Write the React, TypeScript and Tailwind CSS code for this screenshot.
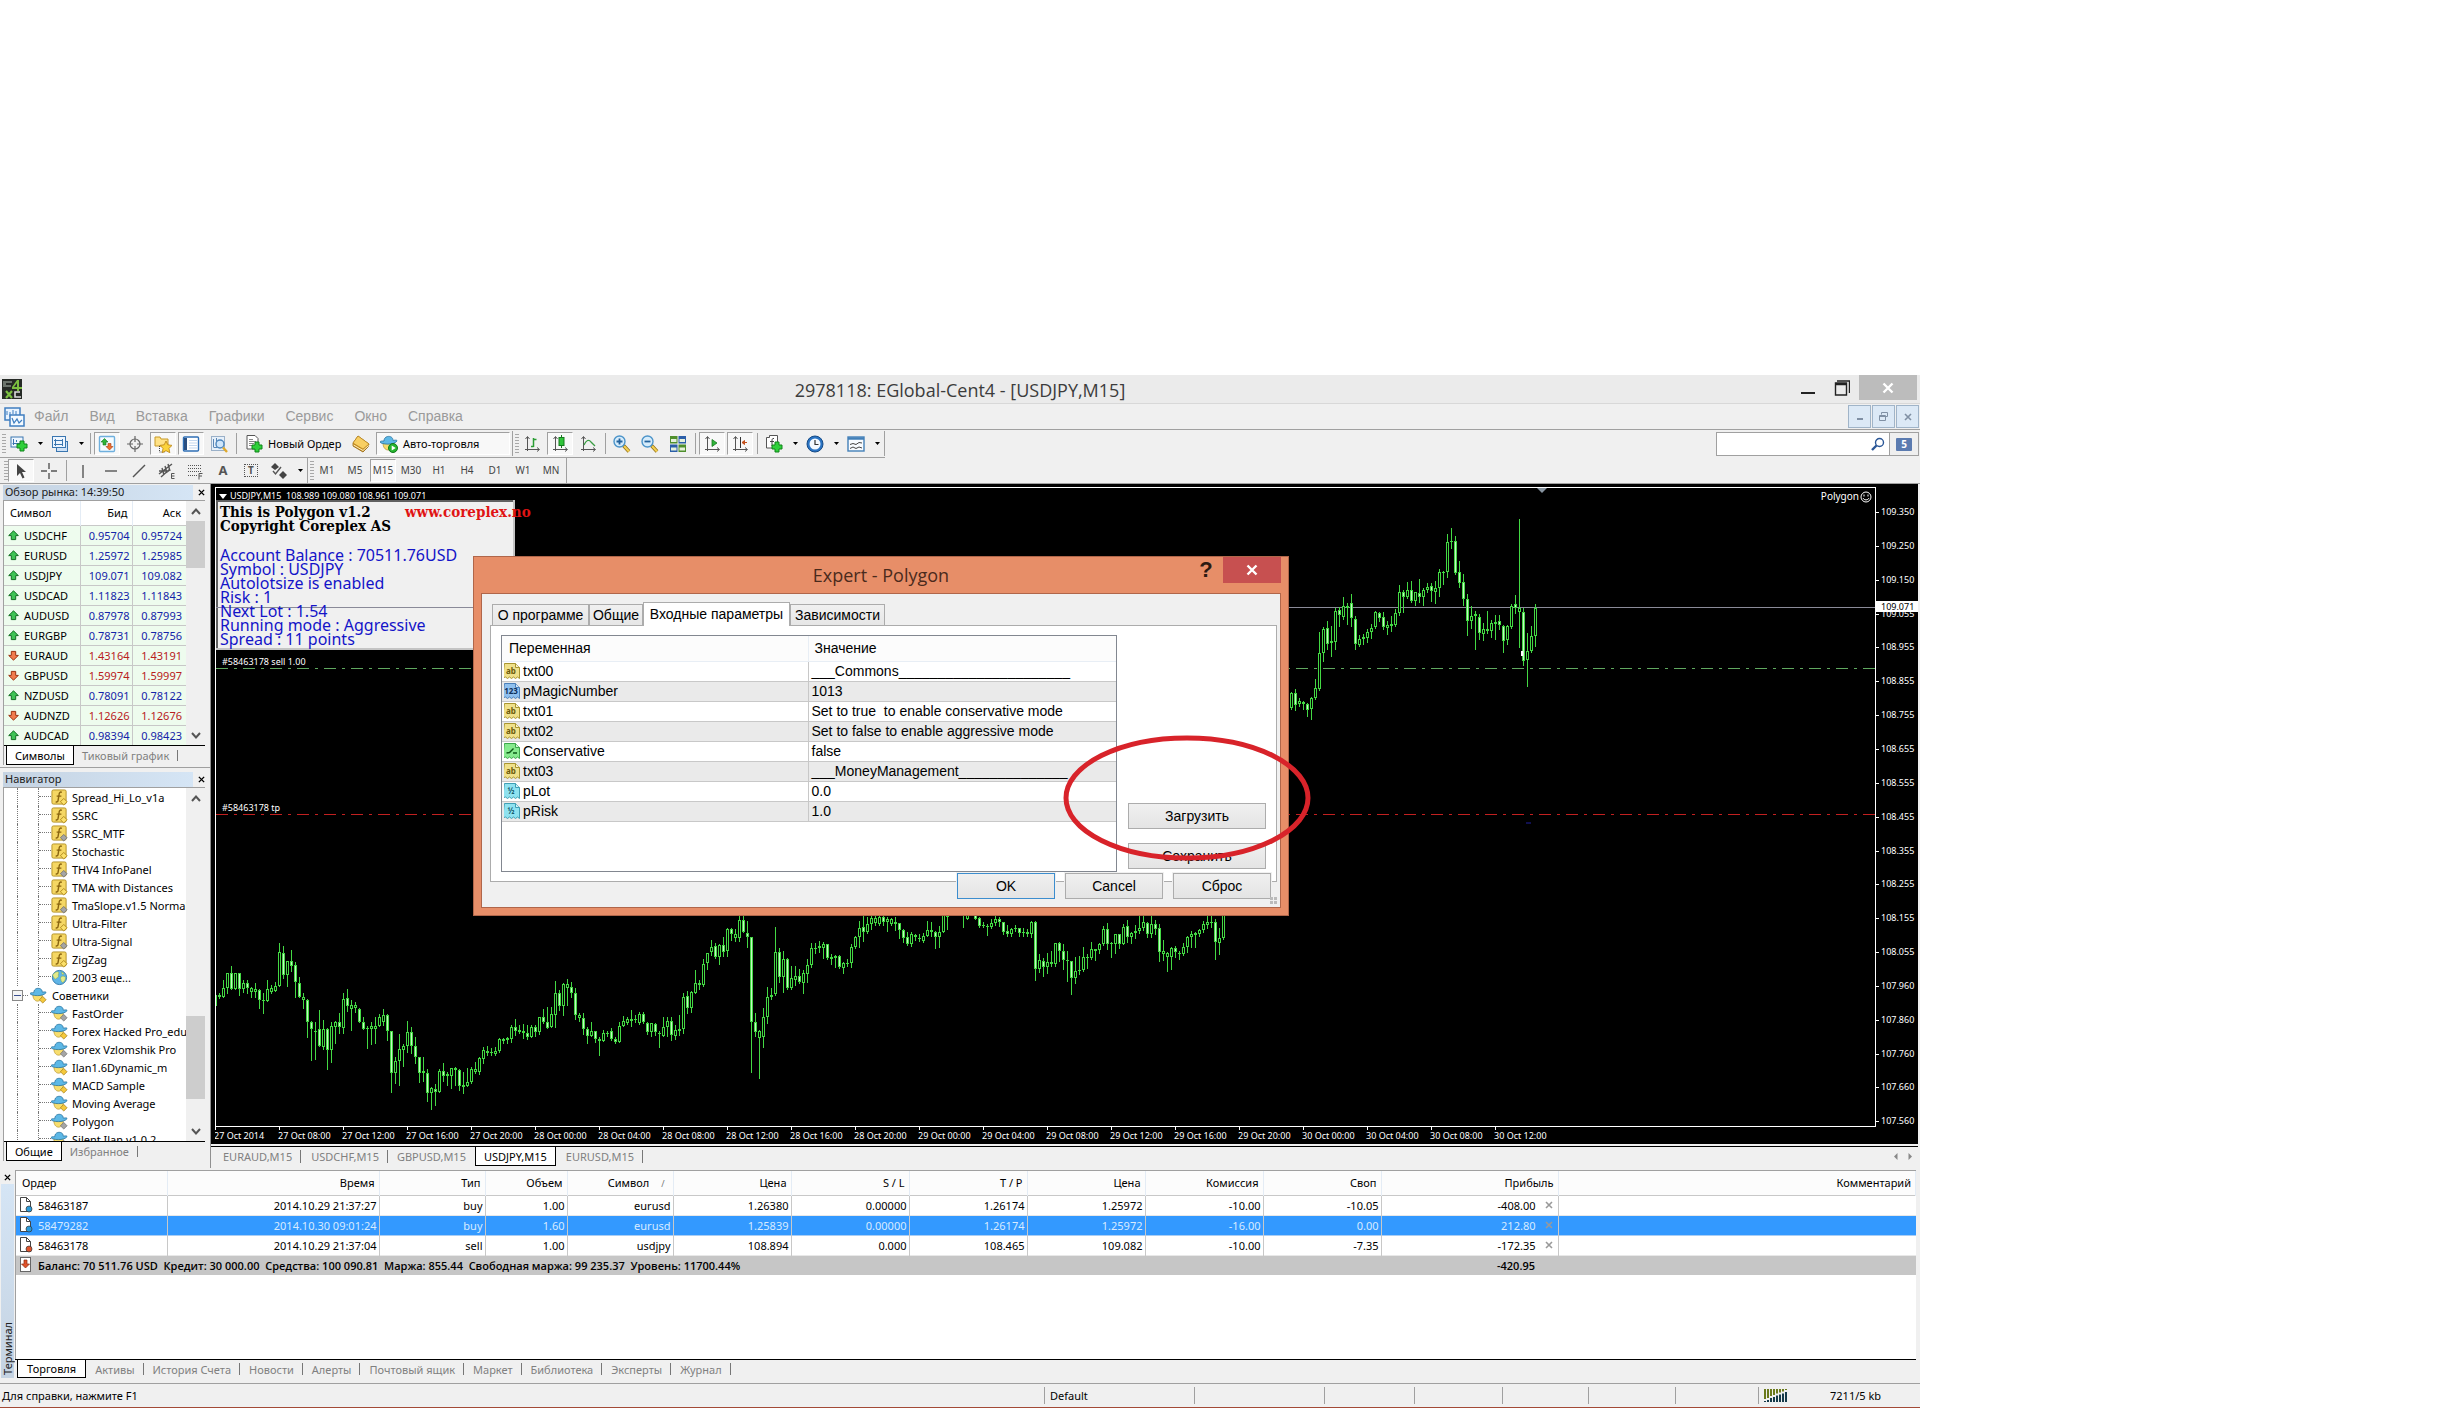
import { ReactNode } from 'react'
import clsx from 'clsx'

// ── Chart data ───────────────────────────────────────────────────────────────
// Each bar is "high,top,bottom,low" in points below the session ceiling,
// a trailing "f" marks a bearish (filled) body.
interface Session {
  start: number
  base: number
  bars: string
}

const SESSIONS: Session[] = [
  {
    start: 0,
    base: 412,
    bars: `
      275,285,318,330 280,285,290,295 240,263,290,290 220,220,263,280 198,220,267,268,f 220,220,267,268
      218,220,267,285,f 240,250,268,275 240,250,265,280,f 260,263,275,290 250,268,275,290 268,270,300,325,f
      280,300,301,340 240,268,302,303 255,265,275,280 245,258,272,272 130,157,257,257 138,160,225,235,f
      182,184,225,257 150,182,197,212,f 185,195,245,290,f 230,250,292,292,f 280,292,300,325 298,300,365,410,f
      362,365,387,480,f 365,393,397,478 330,387,437,438,f 360,388,440,448 385,388,450,506,f 366,377,450,486
      362,365,380,428 340,365,380,400,f 280,298,383,400 267,295,318,332,f 300,315,327,390 307,315,325,335
      325,328,365,367,f 350,365,387,388,f 377,385,388,445 365,378,388,433 352,378,388,430 343,352,377,378
      328,345,365,375 343,346,393,420,f 393,394,520,575,f 470,482,520,548 403,447,482,555 433,437,450,498
      363,397,437,455 380,397,438,458,f 410,437,472,488,f 470,472,518,547,f 470,513,520,543 508,520,580,602,f
      560,563,578,627 552,568,575,616,f 508,513,575,575 490,513,527,543,f 515,522,527,555 503,505,527,563
      500,503,510,555 508,510,557,570,f 515,555,560,578 505,545,557,557 500,508,547,550 485,508,515,520
      470,475,515,522 440,450,478,490 438,452,460,465 445,455,460,465 440,452,462,465 413,418,452,455
      415,418,422,430 410,415,420,428 375,382,418,425 357,382,393,405,f 375,390,395,400 372,392,400,415
      375,400,410,417,f 375,380,410,410 375,380,397,408,f 350,352,397,403 328,352,367,370,f 320,365,383,383,f
      320,343,380,380 242,280,345,380 270,280,318,330,f 250,252,318,345 237,252,263,315 247,260,280,290,f
      265,280,345,358,f 340,345,355,362 340,355,388,403,f 380,388,408,430,f 367,393,407,407 393,393,418,425,f
      412,418,423,465 390,400,423,423 392,400,402,408 385,393,418,420,f 412,418,427,430,f 367,377,425,425
      348,362,377,378 350,358,368,372 330,357,362,378 345,357,358,367 335,343,370,372 335,343,367,370,f
      365,370,397,402,f 368,370,397,408 368,372,397,405,f 393,400,403,440 352,380,407,407 350,363,380,408
      350,362,405,420,f 375,390,407,418 345,388,393,405 278,290,388,398 273,288,325,340,f 273,277,325,335
      210,250,278,280 240,248,255,268 178,193,255,257 160,160,188,208 120,140,155,165 130,138,172,173,f
      133,135,170,193 112,135,155,168,f 85,87,153,167 85,88,103,120,f 88,103,115,122 20,60,115,122
      10,60,97,97,f 63,98,112,140,f 110,112,365,515,f 340,365,395,408,f 390,393,413,535 323,352,410,440
      260,290,352,368 265,285,292,297 82,157,283,285 145,157,232,245,f 152,178,232,275 175,178,265,266,f
      197,235,265,268 197,227,240,255 207,227,247,250,f 210,218,248,278 178,195,222,245 130,145,195,200
      128,143,147,160 123,138,145,155 125,133,143,175 133,133,175,177,f 162,170,178,192 165,167,173,202
      165,168,202,203,f 187,190,203,218 177,188,192,197 132,140,190,200 108,112,140,143 63,83,110,142
      40,80,95,122,f 50,72,95,98 45,55,72,88 45,55,70,75 40,50,72,75 40,52,65,75,f
      50,57,67,92 55,58,72,75 52,67,73,90 70,70,90,115,f 87,90,113,127,f 95,112,132,135,f
      97,102,133,137 103,105,110,120 102,113,118,123 100,107,122,125 63,90,107,107 67,90,95,107
      93,95,110,143,f 78,97,110,140 30,45,97,97 20,45,50,87 10,20,30,40 10,20,30,40
      10,20,30,40 30,40,45,80 40,45,57,57 20,30,40,45 40,45,57,57,f 50,55,78,82,f
      65,75,78,82 72,77,80,105 57,70,80,83 45,57,70,75 50,57,67,78,f 65,67,95,103,f
      75,93,103,107,f 83,88,103,107 75,83,88,93 83,85,100,107,f 85,95,100,107 87,97,103,107
      62,65,103,112 63,65,208,240,f 162,180,208,215 175,182,200,227,f 160,185,202,220 152,185,193,197
      128,130,193,197 127,128,152,182,f 133,152,180,208,f 153,180,182,242 182,182,235,282,f 172,213,235,248
      168,210,213,222 142,172,210,212 163,170,173,203 127,148,173,178 147,148,152,180 130,133,150,160
      78,87,133,135 68,88,132,147,f 127,130,133,170 102,103,133,160 102,103,132,145,f 72,80,132,133
      60,78,110,125,f 97,98,110,128 75,92,98,115 40,85,93,98 40,67,85,90 65,70,103,110,f
      40,73,103,112 60,73,88,103,f 72,85,155,183,f 120,152,162,180 155,160,170,213 140,143,172,208
      138,145,155,170,f 152,158,160,177 130,142,162,165 108,110,142,155 93,103,110,140 95,100,105,142
      87,90,103,108 63,73,90,97 40,67,75,85 40,65,67,82 57,67,127,177,f 85,115,130,162 30,40,115,118`,
  },
  {
    start: 269,
    base: -8,
    bars: `
      637,640,685,687 627,640,675,690,f 655,663,673,677 662,665,673,687 670,672,690,708,f 650,653,688,716
      597,625,655,657 457,520,628,630 440,448,518,542 423,445,492,508,f 437,483,490,528 383,393,485,507
      380,390,405,437,f 352,378,410,418 368,377,383,432 342,370,415,437,f 408,418,493,507,f 465,477,495,497
      463,470,477,492 447,457,475,487 433,443,457,473 392,397,442,445 395,398,413,423,f 397,410,440,448,f
      423,435,443,463 407,433,437,453 387,400,435,438 315,337,400,405 330,335,352,397,f 307,330,352,355
      303,330,362,367,f 335,337,362,375 297,338,352,365,f 325,330,352,375 308,320,330,335 308,318,333,362,f
      303,325,335,368 268,275,325,347 272,277,280,313 162,187,277,290 145,183,187,203 167,183,280,283,f
      243,277,308,322,f 283,307,357,375,f 343,357,423,465,f 378,408,423,443 393,403,408,507 403,410,460,477,f
      430,448,462,480 393,447,452,460 420,430,452,470 405,425,433,477 405,423,435,447,f 435,438,482,515,f
      435,438,480,492 372,377,440,443 345,373,385,398,f 118,383,395,500 385,397,542,555,f 460,512,540,617
      437,468,512,515 373,383,467,497`,
  },
]

const PRICES = [
  '109.350', '109.250', '109.150', '109.055', '108.955', '108.855', '108.755', '108.655', '108.555', '108.455',
  '108.355', '108.255', '108.155', '108.055', '107.960', '107.860', '107.760', '107.660', '107.560',
]

const TIMES = [
  '27 Oct 2014', '27 Oct 08:00', '27 Oct 12:00', '27 Oct 16:00', '27 Oct 20:00', '28 Oct 00:00', '28 Oct 04:00',
  '28 Oct 08:00', '28 Oct 12:00', '28 Oct 16:00', '28 Oct 20:00', '29 Oct 00:00', '29 Oct 04:00', '29 Oct 08:00',
  '29 Oct 12:00', '29 Oct 16:00', '29 Oct 20:00', '30 Oct 00:00', '30 Oct 04:00', '30 Oct 08:00', '30 Oct 12:00',
]

// ── Panel data ───────────────────────────────────────────────────────────────
const QUOTES = [
  { name: 'USDCHF', bid: '0.95704', ask: '0.95724', up: true },
  { name: 'EURUSD', bid: '1.25972', ask: '1.25985', up: true },
  { name: 'USDJPY', bid: '109.071', ask: '109.082', up: true },
  { name: 'USDCAD', bid: '1.11823', ask: '1.11843', up: true },
  { name: 'AUDUSD', bid: '0.87978', ask: '0.87993', up: true },
  { name: 'EURGBP', bid: '0.78731', ask: '0.78756', up: true },
  { name: 'EURAUD', bid: '1.43164', ask: '1.43191', up: false },
  { name: 'GBPUSD', bid: '1.59974', ask: '1.59997', up: false },
  { name: 'NZDUSD', bid: '0.78091', ask: '0.78122', up: true },
  { name: 'AUDNZD', bid: '1.12626', ask: '1.12676', up: false },
  { name: 'AUDCAD', bid: '0.98394', ask: '0.98423', up: true },
]

const INDICATORS = [
  { name: 'Spread_Hi_Lo_v1a', gray: false },
  { name: 'SSRC', gray: false },
  { name: 'SSRC_MTF', gray: true },
  { name: 'Stochastic', gray: false },
  { name: 'THV4 InfoPanel', gray: true },
  { name: 'TMA with Distances', gray: false },
  { name: 'TmaSlope.v1.5 Normal', gray: true },
  { name: 'Ultra-Filter', gray: false },
  { name: 'Ultra-Signal', gray: true },
  { name: 'ZigZag', gray: false },
]

const EXPERTS = [
  { name: 'FastOrder', gray: true },
  { name: 'Forex Hacked Pro_edu', gray: false },
  { name: 'Forex Vzlomshik Pro', gray: true },
  { name: 'Ilan1.6Dynamic_m', gray: false },
  { name: 'MACD Sample', gray: false },
  { name: 'Moving Average', gray: false },
  { name: 'Polygon', gray: true },
  { name: 'Silent Ilan v1.0.2', gray: true },
]

const PARAMS = [
  { kind: 'ab', name: 'txt00', value: '___Commons______________________' },
  { kind: '123', name: 'pMagicNumber', value: '1013' },
  { kind: 'ab', name: 'txt01', value: 'Set to true  to enable conservative mode' },
  { kind: 'ab', name: 'txt02', value: 'Set to false to enable aggressive mode' },
  { kind: 'bool', name: 'Conservative', value: 'false' },
  { kind: 'ab', name: 'txt03', value: '___MoneyManagement______________' },
  { kind: '½', name: 'pLot', value: '0.0' },
  { kind: '½', name: 'pRisk', value: '1.0' },
]

const ORDERS = [
  ['58463187', '2014.10.29 21:37:27', 'buy', '1.00', 'eurusd', '1.26380', '0.00000', '1.26174', '1.25972', '-10.00', '-10.05', '-408.00'],
  ['58479282', '2014.10.30 09:01:24', 'buy', '1.60', 'eurusd', '1.25839', '0.00000', '1.26174', '1.25972', '-16.00', '0.00', '212.80'],
  ['58463178', '2014.10.29 21:37:04', 'sell', '1.00', 'usdjpy', '108.894', '0.000', '108.465', '109.082', '-10.00', '-7.35', '-172.35'],
]

const ORDER_HEAD = ['Ордер', 'Время', 'Тип', 'Объем', 'Символ', 'Цена', 'S / L', 'T / P', 'Цена', 'Комиссия', 'Своп', 'Прибыль', 'Комментарий']

const TERMINAL_TABS = ['Торговля', 'Активы', 'История Счета', 'Новости', 'Алерты', 'Почтовый ящик', 'Маркет', 'Библиотека', 'Эксперты', 'Журнал']

// ── Icons ────────────────────────────────────────────────────────────────────
function Ico({ children, size = 18 }: { children: ReactNode; size?: number }) {
  return (
    <svg width={size} height={size} viewBox="0 0 18 18" className="shrink-0" aria-hidden="true">
      {children}
    </svg>
  )
}

const Plus = ({ x, y }: { x: number; y: number }) => (
  <path
    d={`M${x + 3} ${y}h4v3h3v4h-3v3h-4v-3h-3v-4h3z`}
    fill="#2fd03a" stroke="#11841a" strokeWidth="1"
  />
)

const Axes = () => <path d="M4.5 2v14M2 14.5h14M2.5 4l2-2.5 2 2.5M14 12.5l2.5 2-2.5 2" fill="none" stroke="#555" />

const NewChartIcon = () => (
  <Ico>
    <rect x="1" y="2" width="12" height="10" fill="#eef6ff" stroke="#3a76b0" />
    <path d="M3.5 4v6M2.5 8.5h8M6.5 5v2" stroke="#3a76b0" fill="none" />
    <Plus x={7} y={6} />
  </Ico>
)
const ProfilesIcon = () => (
  <Ico>
    <rect x="5.5" y="6.5" width="11" height="10" fill="#cfe2f7" stroke="#3a76b0" />
    <rect x="1.5" y="1.5" width="13" height="11" fill="#eef6ff" stroke="#3a76b0" />
    <path d="M3 5.5h9M3 9.5h9M4.5 4v7M11.5 4v7" stroke="#3a76b0" fill="none" />
  </Ico>
)
const MarketIcon = () => (
  <Ico>
    <rect x="1.5" y="1.5" width="15" height="15" rx="1" fill="#f5fbff" stroke="#6fb0de" strokeWidth="1.4" />
    <path d="M6.5 3.5L10 7H8v3H5V7H3z" fill="#2fb53a" stroke="#11771a" strokeWidth=".6" />
    <path d="M11.5 15L15 11.5h-2v-3h-3v3H8z" fill="#f07030" stroke="#a43a10" strokeWidth=".6" />
  </Ico>
)
const AimIcon = () => (
  <Ico>
    <circle cx="9" cy="9" r="5" fill="none" stroke="#666" strokeWidth="1.2" />
    <path d="M9 1v6M9 11v6M1 9h6M11 9h6" stroke="#666" strokeWidth="1.2" />
  </Ico>
)
const FolderStarIcon = () => (
  <Ico>
    <path d="M1 2h5l1 2h7v7H1z" fill="#ffe287" stroke="#c79a28" />
    <path d="M5.5 11v6h5" fill="none" stroke="#444" strokeDasharray="1 1" />
    <path d="M12 6l1.8 3.8 4.2.6-3 3 .8 4.3-3.8-2-3.8 2 .8-4.3-3-3 4.2-.6z" fill="#fbd33c" stroke="#b98212" strokeWidth=".8" />
  </Ico>
)
const DataWindowIcon = () => (
  <Ico>
    <rect x="1.5" y="2" width="15" height="14" rx="1" fill="#fff" stroke="#2f6fb5" strokeWidth="1.4" />
    <rect x="2" y="3" width="3" height="12" fill="#2a4f80" />
    <path d="M7 5.5h8M7 8h8M7 10.5h8M7 13h8" stroke="#c3d7ee" strokeWidth="1" />
  </Ico>
)
const TesterIcon = () => (
  <Ico>
    <rect x="1.5" y="1.5" width="13" height="14" fill="#e6f0fa" stroke="#9ab0c8" />
    <path d="M3.5 4v8M3.5 12.5h4M6.5 3v4" stroke="#5b86b5" fill="none" />
    <circle cx="10" cy="9" r="4" fill="#cfe6fb" stroke="#4d86bd" strokeWidth="1.4" />
    <path d="M13 12.5l4 4.5" stroke="#dfa92c" strokeWidth="2.4" />
  </Ico>
)
const OrderIcon = () => (
  <Ico>
    <path d="M2 .5h8l3 3V14H2z" fill="#fff" stroke="#555" />
    <path d="M4 4.5h4M4 6.5h7M4 8.5h5M4 10.5h3" stroke="#888" />
    <Plus x={7} y={7} />
  </Ico>
)
const GoldIcon = () => (
  <Ico>
    <path d="M1 8L6 1l11 8-1 3-5 5L1 11z" fill="#c98d1c" stroke="#94650f" strokeWidth=".8" />
    <path d="M1 8l5-7 11 8-6 5z" fill="#f8cf63" stroke="#b37f1a" strokeWidth=".6" />
    <path d="M1.5 10l9.500 5.500 5.500-5" fill="none" stroke="#fff2c4" />
  </Ico>
)
const HatIcon = () => (
  <>
    <path d="M3 8c0 4 2 7 5 7s5-3 5-7z" fill="#f7dd6d" stroke="#b38f25" strokeWidth=".7" />
    <path d="M0 7c1 2.5 14 3.5 17-1 .5-1-2-1-4-.5C13 2 10 1 7.5 1.5S4 4 4 6C2 6 0 6 0 7z" fill="#5db8e6" stroke="#22709e" strokeWidth=".8" />
  </>
)
const AutoIcon = () => (
  <Ico>
    <HatIcon />
    <circle cx="13" cy="13" r="4.5" fill="#25b52e" stroke="#10771a" />
    <path d="M11.7 10.5l4 2.5-4 2.5z" fill="#fff" />
  </Ico>
)
const ExpertIcon = ({ gray }: { gray: boolean }) => (
  <Ico size={17}>
    <HatIcon />
    <path d="M13.5 10l3.5 3.5-3.5 3.5-3.5-3.5z" fill={gray ? '#a5a5a5' : '#f5c93c'} stroke={gray ? '#6f6f6f' : '#a87f14'} strokeWidth=".8" />
  </Ico>
)
const FuncIcon = ({ gray }: { gray: boolean }) => (
  <Ico size={17}>
    <rect x="1" y="1" width="15" height="15" rx="1.5" fill="#f5d764" stroke="#b39125" />
    <path d="M11.5 3.5c-2-.8-2.7.4-3 2.5L7.5 12c-.3 1.5-1 2-2.5 1.5M6 7.5h5" fill="none" stroke="#8a6510" strokeWidth="1.5" />
    <path d="M13.5 10l3.5 3.5-3.5 3.5-3.5-3.5z" fill={gray ? '#a5a5a5' : '#fbe06a'} stroke={gray ? '#6f6f6f' : '#a87f14'} strokeWidth=".9" />
  </Ico>
)
const GlobeIcon = () => (
  <Ico size={17}>
    <circle cx="9" cy="9" r="7.5" fill="#5fb4e6" stroke="#2f78ab" />
    <path d="M4 4c3-2 5-1 4 1s1 3-1 4-2 3-4 0-1-3 1-5zM11 8c3-1 5 0 4 3s-3 4-4 2 0-2-1-3zM11 3l3 2-2 1z" fill="#e3ea8a" stroke="#7da02c" strokeWidth=".4" />
  </Ico>
)
const Magnifier = ({ sign }: { sign: string }) => (
  <Ico>
    <path d="M10.5 10.5l5.5 6" stroke="#8f6b12" strokeWidth="3.6" />
    <path d="M11 11l5 5.5" stroke="#f2cf52" strokeWidth="2.2" />
    <circle cx="6.5" cy="6.5" r="5.5" fill="#d6ecfb" stroke="#4c94c9" strokeWidth="1.4" />
    <path d={sign} stroke="#23629c" strokeWidth="1.8" />
  </Ico>
)
const TileIcon = () => (
  <Ico>
    <rect x="1" y="1" width="7.5" height="7.5" fill="#4f8f2c" />
    <rect x="9.5" y="1" width="7.5" height="7.5" fill="#2b5ea8" />
    <rect x="1" y="9.5" width="7.5" height="7.5" fill="#2b5ea8" />
    <rect x="9.5" y="9.5" width="7.5" height="7.5" fill="#4f8f2c" />
    <path d="M2 4h5.5v3H2zM10.5 4H16v3h-5.500zM2 12.5h5.5v3H2zM10.5 12.5H16v3h-5.5z" fill="#e6f1dc" />
  </Ico>
)
const BarsIcon = () => <Ico><Axes /><path d="M10.5 3v9M10.5 4.5h3M8 11.5h2.5" stroke="#2a9c33" strokeWidth="1.5" /></Ico>
const CandleIcon = () => (
  <Ico>
    <Axes />
    <path d="M10.5 0v13" stroke="#167a1e" />
    <rect x="8" y="2.5" width="5" height="8" fill="#2fc43a" stroke="#167a1e" />
  </Ico>
)
const LineIcon = () => <Ico><Axes /><path d="M5 10c2-5 5-6 7-3l4 4" fill="none" stroke="#3a9c43" strokeWidth="1.3" /></Ico>
const ScrollIcon = () => <Ico><Axes /><path d="M9 4.5l5 3.5-5 3.5z" fill="#2fb53a" stroke="#167a1e" strokeWidth=".8" /></Ico>
const ShiftIcon = () => (
  <Ico>
    <Axes />
    <path d="M9.5 2v11" stroke="#333" />
    <path d="M16 7.5h-5M13.5 5.5l-2.5 2 2.5 2z" fill="#c4501c" stroke="#c4501c" />
  </Ico>
)
const IndicatorsIcon = () => (
  <Ico>
    <path d="M1.5 2.5h3v-2h8V13h-11z" fill="#fff" stroke="#555" />
    <path d="M9 3.5c-2-.5-2 1-2 3V11M5 6.5h4" fill="none" stroke="#444" />
    <Plus x={7} y={7} />
  </Ico>
)
const ClockIcon = () => (
  <Ico>
    <circle cx="9" cy="9" r="8" fill="#2a74c4" stroke="#154a85" />
    <circle cx="9" cy="9" r="5.5" fill="#f3f9ff" />
    <path d="M9 5v4.5h3.5" fill="none" stroke="#333" strokeWidth="1.2" />
  </Ico>
)
const TemplateIcon = () => (
  <Ico>
    <rect x="1" y="2" width="16" height="14" fill="#f8fbff" stroke="#4380b8" strokeWidth="1.4" />
    <path d="M1 3.5h16" stroke="#4380b8" strokeWidth="2.5" />
    <path d="M3 9.5l3-1 3 1 3-2 3 .5M3 13.5l3-1.5 3 1.5 3-1.5 3 1" fill="none" stroke="#444" />
  </Ico>
)

const stroke = { fill: 'none', stroke: '#555', strokeWidth: 1.4 }
const CursorIcon = () => <Ico><path d="M5 2v12l3-3 2.5 5.5 2-1L10 10h4z" fill="#444" /></Ico>
const CrossIcon = () => <Ico><path d="M9 1v6M9 11v6M1 9h6M11 9h6" {...stroke} /></Ico>
const VLineIcon = () => <Ico><path d="M9 3v13" {...stroke} /></Ico>
const HLineIcon = () => <Ico><path d="M3 9h12" {...stroke} /></Ico>
const TrendIcon = () => <Ico><path d="M3 15L15 3" {...stroke} /></Ico>
const ChannelIcon = () => (
  <Ico>
    <path d="M1 12L14 2M3 15L12 7M4 6l2 7M7 4l2 7M10 2l2 7M1 9h10" {...stroke} />
    <path d="M16.5 11.5h-3v5h3M13.5 14h3" {...stroke} strokeWidth="1" />
  </Ico>
)
const FiboIcon = () => (
  <Ico>
    <path d="M2 3.5h14M2 6.5h14M2 9.5h14M2 13.5h9" stroke="#555" strokeDasharray="1 1" />
    <path d="M16.5 11.5H13v6M13 14h3" {...stroke} strokeWidth="1" />
  </Ico>
)
const ShapesIcon = () => (
  <Ico>
    <path d="M1 5l4-4 4 4-4 3zM9 13l4-4 4 4-4 4z" fill="#444" />
    <path d="M3 9l2.5 3L11 5" {...stroke} />
  </Ico>
)

const ArrowIcon = ({ up }: { up: boolean }) => (
  <svg width="11" height="11" viewBox="0 0 11 11" className={clsx('shrink-0', !up && 'rotate-180')} aria-hidden="true">
    <path d="M5.5.8L10.3 5.6H7.7v4H3.3v-4H.7z" fill={up ? '#3fc455' : '#f07a4c'} stroke={up ? '#126e22' : '#9c3210'} />
  </svg>
)

const PARAM_COLORS: Record<string, string[]> = {
  ab: ['#efe08a', '#a8952f', '#6b5a08'],
  '123': ['#8fc0ee', '#4a7fb8', '#10305c'],
  bool: ['#86ea8e', '#3aa64a', '#0d5c18'],
  '½': ['#8fe2f0', '#3f9fb4', '#155d70'],
}

function ParamIcon({ kind }: { kind: string }) {
  const [fill, line, ink] = PARAM_COLORS[kind]
  return (
    <svg width="16" height="16" viewBox="0 0 16 16" className="shrink-0" aria-hidden="true">
      <path d="M.5.5h11l4 4v11l-2-1.5-2 1.5-2-1.5-2 1.5-2-1.5-2 1.5-2-1.5-3 1z" fill={fill} stroke={line} />
      <path d="M11.5.5v4h4" fill="#fff" fillOpacity=".6" stroke={line} />
      {kind === 'bool'
        ? <path d="M2.5 10l3-.5 4-4M9 10h4" fill="none" stroke={ink} strokeWidth="1.4" />
        : <text x="7" y="11" textAnchor="middle" fill={ink} className="font-['Noto_Sans'] text-[8px] font-bold">{kind}</text>}
    </svg>
  )
}

const DocIcon = ({ color }: { color: string }) => (
  <svg width="14" height="16" viewBox="0 0 14 16" className="shrink-0" aria-hidden="true">
    <path d="M1.5.5h6l4 4v10h-10z" fill="#fff" stroke="#444" />
    <path d="M7.5.5v4h4" fill="none" stroke="#444" />
    <circle cx="10" cy="12" r="3" fill={color} stroke="#333" strokeWidth=".7" />
  </svg>
)

const CloseX = ({ size = 8 }: { size?: number }) => (
  <svg width={size} height={size} viewBox="0 0 8 8" aria-hidden="true">
    <path d="M1 1l6 6M7 1L1 7" stroke="currentColor" strokeWidth="1.6" />
  </svg>
)

// ── Toolbar pieces ───────────────────────────────────────────────────────────
interface ToolProps {
  label: string
  pressed?: boolean
  children: ReactNode
}

function Tool({ label, pressed, children }: ToolProps) {
  return (
    <button
      type="button"
      title={label}
      aria-label={label}
      aria-pressed={pressed}
      className={clsx(
        'mr-[2px] flex h-[23px] w-[26px] shrink-0 items-center justify-center border',
        pressed ? 'border-[#a0a0a0] border-r-white border-b-white bg-[#f8f8f8]' : 'border-transparent',
      )}
    >
      {children}
    </button>
  )
}

const Caret = () => (
  <button type="button" aria-label="Ещё" className="flex w-[13px] shrink-0 items-center justify-center">
    <svg width="5" height="3" viewBox="0 0 5 3" aria-hidden="true"><path d="M0 0h5L2.5 3z" fill="#000" /></svg>
  </button>
)
const ToolSep = () => <span className="mr-[3px] ml-[2px] h-[21px] w-px shrink-0 bg-[#a0a0a0]" />
const ToolEnd = () => <span className="h-[25px] w-px shrink-0 bg-[#a0a0a0]" />
const Grip = () => <span className="ml-[2px] h-[20px] w-[4px] shrink-0 bg-[repeating-linear-gradient(#a8a8a8_0_1px,transparent_1px_3px)]" />

function Toolbars() {
  return (
    <div className="border-b border-[#a0a0a0]">
      <div className="flex h-[28px] items-center">
        <div className="flex h-full items-center border-b border-[#a0a0a0]">
          <Grip />
          <Tool label="Новый график"><NewChartIcon /></Tool>
          <Caret />
          <Tool label="Профили"><ProfilesIcon /></Tool>
          <Caret />
          <ToolSep />
          <Tool label="Обзор рынка" pressed><MarketIcon /></Tool>
          <Tool label="Перекрестие"><AimIcon /></Tool>
          <Tool label="Навигатор" pressed><FolderStarIcon /></Tool>
          <Tool label="Терминал" pressed><DataWindowIcon /></Tool>
          <Tool label="Тестер стратегий"><TesterIcon /></Tool>
          <ToolSep />
          <button type="button" className="flex w-[108px] items-center gap-[5px] pl-[5px] text-black">
            <OrderIcon />
            <span>Новый Ордер</span>
          </button>
          <Tool label="MetaEditor"><GoldIcon /></Tool>
          <button
            type="button"
            aria-pressed="true"
            className="mr-[2px] flex h-[23px] w-[134px] items-center gap-[5px] border border-[#a0a0a0] border-r-white border-b-white bg-[#f8f8f8] pl-[3px] text-black"
          >
            <AutoIcon />
            <span>Авто-торговля</span>
          </button>
          <ToolEnd />
          <Grip />
          <Tool label="Бары"><BarsIcon /></Tool>
          <Tool label="Свечи" pressed><CandleIcon /></Tool>
          <Tool label="Линия"><LineIcon /></Tool>
          <ToolSep />
          <Tool label="Увеличить"><Magnifier sign="M3.5 6.5h6M6.5 3.5v6" /></Tool>
          <Tool label="Уменьшить"><Magnifier sign="M3.5 6.5h6" /></Tool>
          <Tool label="Плитка"><TileIcon /></Tool>
          <ToolSep />
          <Tool label="Автопрокрутка" pressed><ScrollIcon /></Tool>
          <Tool label="Сдвиг графика" pressed><ShiftIcon /></Tool>
          <ToolSep />
          <Tool label="Индикаторы"><IndicatorsIcon /></Tool>
          <Caret />
          <Tool label="Периоды"><ClockIcon /></Tool>
          <Caret />
          <Tool label="Шаблоны"><TemplateIcon /></Tool>
          <Caret />
          <ToolEnd />
        </div>
        <div className="mr-px ml-auto flex h-[24px] border border-[#a0a0a0]">
          <input type="search" aria-label="Поиск" className="w-[150px] bg-white px-1 outline-none" />
          <button type="button" aria-label="Найти" className="bg-white px-[4px]">
            <svg width="14" height="14" viewBox="0 0 14 14" aria-hidden="true">
              <circle cx="8.5" cy="5.5" r="4" fill="#fff" stroke="#2b5797" strokeWidth="1.4" />
              <path d="M5.5 8.5L1 13" stroke="#2b5797" strokeWidth="2.4" />
            </svg>
          </button>
          <button type="button" aria-label="Сообщения" className="flex w-[29px] items-center justify-center border-l border-[#a0a0a0] bg-[#efefef]">
            <span className="rounded-[1px] bg-[#5b7bb0] px-[5px] text-[10px] leading-[13px] font-bold text-white">5</span>
          </button>
        </div>
      </div>

      <div className="flex h-[25px] items-center pl-[2px]">
        <Grip />
        <Tool label="Курсор" pressed><CursorIcon /></Tool>
        <Tool label="Перекрестие"><CrossIcon /></Tool>
        <ToolSep />
        <Tool label="Вертикальная линия"><VLineIcon /></Tool>
        <Tool label="Горизонтальная линия"><HLineIcon /></Tool>
        <Tool label="Трендовая линия"><TrendIcon /></Tool>
        <Tool label="Канал"><ChannelIcon /></Tool>
        <Tool label="Фибоначчи"><FiboIcon /></Tool>
        <Tool label="Текст"><span className="text-[13px] font-bold text-[#555]">A</span></Tool>
        <Tool label="Метка">
          <span className="border border-dotted border-[#555] px-[3px] text-[10px] leading-[11px] font-bold text-[#555]">T</span>
        </Tool>
        <Tool label="Стрелки"><ShapesIcon /></Tool>
        <Caret />
        <ToolEnd />
        <Grip />
        {['M1', 'M5', 'M15', 'M30', 'H1', 'H4', 'D1', 'W1', 'MN'].map(tf => (
          <Tool key={tf} label={tf} pressed={tf === 'M15'}>
            <span className="text-[10px] text-[#444]">{tf}</span>
          </Tool>
        ))}
        <ToolEnd />
      </div>
    </div>
  )
}

// ── Side panels ──────────────────────────────────────────────────────────────
function PanelTitle({ title }: { title: string }) {
  return (
    <div className="flex h-[15px] items-center">
      <h2 className="h-full flex-1 bg-gradient-to-r from-[#c5d3e2] to-[#d5e5f5] pl-[2px] leading-[14px] text-[#222]">{title}</h2>
      <button type="button" aria-label="Закрыть" className="flex w-[16px] justify-center text-black"><CloseX size={7} /></button>
    </div>
  )
}

const Chevron = ({ down }: { down?: boolean }) => (
  <button type="button" aria-label={down ? 'Вниз' : 'Вверх'} className="flex h-[20px] w-full items-center justify-center">
    <svg width="10" height="7" viewBox="0 0 10 7" aria-hidden="true">
      <path d={down ? 'M1 1l4 4.5L9 1' : 'M1 6l4-4.5L9 6'} fill="none" stroke="#555" strokeWidth="2" />
    </svg>
  </button>
)

function Scrollbar({ thumb }: { thumb: string }) {
  return (
    <div className="flex w-[19px] shrink-0 flex-col bg-[#f0f0f0]">
      <Chevron />
      <div className={clsx('bg-[#cdcdcd]', thumb)} />
      <div className="flex-1" />
      <Chevron down />
    </div>
  )
}

function SideTabs({ active, other }: { active: string; other: string }) {
  return (
    <div className="flex h-[20px] border-t border-black">
      <button type="button" className="ml-[2px] border border-t-0 border-black bg-white px-[8px] leading-[17px] text-black">{active}</button>
      <button type="button" className="px-[8px] text-[#808080]">{other}</button>
      <span className="my-[4px] w-px bg-[#777]" />
    </div>
  )
}

function MarketWatch() {
  return (
    <section className="border-b border-[#a0a0a0] pt-px pr-px pb-[2px] pl-[3px]">
      <PanelTitle title="Обзор рынка: 14:39:50" />
      <div className="mr-[4px] border-t border-l border-[#a0a0a0]">
        <div className="flex h-[244px] overflow-hidden bg-white">
          <table className="flex-1 table-fixed border-collapse self-start">
            <colgroup>
              <col className="w-[76px]" />
              <col className="w-[52px]" />
              <col />
            </colgroup>
            <thead>
              <tr className="h-[24px] border-b border-[#c8c8c8] text-black">
                <th className="border-r border-[#e4ecf5] pl-[6px] text-left font-normal">Символ</th>
                <th className="border-r border-[#e4ecf5] pr-[4px] text-right font-normal">Бид</th>
                <th className="pr-[5px] text-right font-normal">Аск</th>
              </tr>
            </thead>
            <tbody>
              {QUOTES.map(q => (
                <tr key={q.name} className="h-[20px] border-b border-[#c8c8c8] bg-[#eefcee]">
                  <td className="border-r border-[#c8c8c8] text-black">
                    <span className="flex items-center gap-[5px] pl-[4px]"><ArrowIcon up={q.up} />{q.name}</span>
                  </td>
                  <td className={clsx('border-r border-[#c8c8c8] pr-[2px] text-right', q.up ? 'text-[#1424a8]' : 'text-[#b8201c]')}>{q.bid}</td>
                  <td className={clsx('pr-[4px] text-right', q.up ? 'text-[#1424a8]' : 'text-[#b8201c]')}>{q.ask}</td>
                </tr>
              ))}
            </tbody>
          </table>
          <Scrollbar thumb="h-[47px]" />
        </div>
        <SideTabs active="Символы" other="Тиковый график" />
      </div>
    </section>
  )
}

function Leaf({ icon, name }: { icon: ReactNode; name: string }) {
  return (
    <li className="flex h-[18px] items-center whitespace-nowrap text-black">
      <span className="ml-[13px] h-full w-[21px] shrink-0 border-l border-dotted border-[#777]" />
      <span className="h-full w-[13px] shrink-0 border-l border-dotted border-[#777]">
        <span className="block h-[9px] border-b border-dotted border-[#777]" />
      </span>
      {icon}
      <span className="ml-[4px]">{name}</span>
    </li>
  )
}

function Navigator() {
  return (
    <section className="flex flex-1 flex-col pt-[4px] pr-px pl-[3px]">
      <PanelTitle title="Навигатор" />
      <div className="mr-[4px] border-t border-l border-[#a0a0a0]">
        <div className="flex h-[353px] overflow-hidden bg-white">
          <ul className="w-0 flex-1 overflow-hidden">
            {INDICATORS.map(i => <Leaf key={i.name} name={i.name} icon={<FuncIcon gray={i.gray} />} />)}
            <Leaf name="2003 еще..." icon={<GlobeIcon />} />
            <li className="flex h-[18px] items-center text-black">
              <button
                type="button"
                aria-label="Свернуть"
                className="ml-[8px] flex size-[11px] items-center justify-center border border-[#888] bg-[#f4f4f4]"
              >
                <span className="h-px w-[7px] bg-[#3a4f90]" />
              </button>
              <span className="mr-[2px] w-[5px] border-b border-dotted border-[#777]" />
              <ExpertIcon gray={false} />
              <span className="ml-[5px]">Советники</span>
            </li>
            {EXPERTS.map(e => <Leaf key={e.name} name={e.name} icon={<ExpertIcon gray={e.gray} />} />)}
          </ul>
          <Scrollbar thumb="mt-[208px] h-[83px]" />
        </div>
        <SideTabs active="Общие" other="Избранное" />
      </div>
    </section>
  )
}

// ── Chart ────────────────────────────────────────────────────────────────────
const GREEN = '#43d843'

function Candles({ session }: { session: Session }) {
  return (
    <g shapeRendering="crispEdges">
      {session.bars.trim().split(/\s+/).map((bar, i) => {
        const [h, t, b, l, filled] = bar.split(',')
        const y = (v: string) => session.base + Math.round(Number(v) / 3)
        const x = (session.start + i) * 4 - 1
        const height = Math.max(1, y(b) - y(t))
        return (
          <g key={i}>
            <rect x={x} y={y(h)} width="1" height={y(l) - y(h) + 1} fill={GREEN} />
            <rect x={x - 1} y={y(t)} width="3" height={height} fill={GREEN} />
            {height > 2 && <rect x={x} y={y(t) + 1} width="1" height={height - 2} fill={filled ? '#c4f8c4' : '#000'} />}
          </g>
        )
      })}
    </g>
  )
}

const COMMENTS = [
  'Account Balance : 70511.76USD', 'Symbol : USDJPY', 'Autolotsize is enabled', 'Risk : 1', 'Next Lot : 1.54',
  'Running mode : Aggressive', 'Spread : 11 points',
]

function Plot() {
  const heading = "font-['DejaVu_Serif_Condensed','DejaVu_Serif',serif] text-[15px] font-bold"
  return (
    <svg className="block h-[638px] w-full font-['Noto_Sans',sans-serif]" role="img" aria-label="USDJPY, M15">
      <rect width="100%" height="638" fill="#000" />
      <path d="M3 6h8L7 11z" fill="#fff" />
      <text x="14" y="11" fill="#fff" className="text-[9px] whitespace-pre">USDJPY,M15  108.989 109.080 108.961 109.071</text>
      <path d="M1321 0h10l-5 5z" fill="#8794a0" />
      <rect x="0" y="12" width="299" height="150" fill="#c4c4c4" />
      <rect x="0" y="12" width="297" height="148" fill="#606060" />
      <rect x="2" y="14" width="295" height="146" fill="#f0f0f0" />

      <line x1="0" x2="100%" y1="180.5" y2="180.5" stroke="#5fa85f" strokeDasharray="12 6 3 6" />
      <line x1="0" x2="100%" y1="326.5" y2="326.5" stroke="#c22020" strokeDasharray="12 6 3 6" />
      <line x1="0" x2="100%" y1="119.5" y2="119.5" stroke="#8a8a98" />
      <text x="6" y="177" fill="#fff" className="text-[9px]">#58463178 sell 1.00</text>
      <text x="6" y="323" fill="#fff" className="text-[9px]">#58463178 tp</text>

      <text x="4" y="29" className={heading}>This is Polygon v1.2</text>
      <text x="4" y="43" className={heading}>Copyright Coreplex AS</text>
      <text x="189" y="29" fill="#e01414" className={heading}>www.coreplex.no</text>
      {COMMENTS.map((line, i) => (
        <text key={line} x="4" y={73 + i * 14} fill="#1414c8" className="text-[16px]">{line}</text>
      ))}

      {SESSIONS.map(s => <Candles key={s.start} session={s} />)}
      <rect x="1305" y="163" width="2" height="5" fill="#fff" />
      <rect x="1310" y="334" width="5" height="2" fill="#101050" />
    </svg>
  )
}

function Chart() {
  return (
    <div className="bg-black pt-[3px] pl-[4px]">
      <div className="flex">
        <div className="relative min-w-0 flex-1 border border-white">
          <Plot />
          <div className="absolute top-[2px] right-[3px] flex items-center gap-px text-[10px] leading-[13px] text-white">
            Polygon
            <svg width="12" height="12" viewBox="0 0 12 12" aria-hidden="true">
              <circle cx="6" cy="6" r="5" fill="none" stroke="#fff" />
              <path d="M4 3.5v2M8 3.5v2M3 7c1 2.5 5 2.5 6 0" fill="none" stroke="#fff" />
            </svg>
          </div>
        </div>
        <svg className="block h-[640px] w-[42px] font-['Noto_Sans',sans-serif]" role="img" aria-label="Цена">
          {PRICES.map((p, i) => {
            const y = 25 + Math.round(i * 33.85)
            return (
              <g key={p}>
                <rect x="0" y={y} width="3" height="1" fill="#fff" />
                <text x="5" y={y + 3} fill="#fff" className="text-[9px]">{p}</text>
              </g>
            )
          })}
          <rect x="0" y="114" width="42" height="11" fill="#fff" />
          <text x="5" y="123" className="text-[9px]">109.071</text>
        </svg>
      </div>
      <svg className="block h-[17px] w-full font-['Noto_Sans',sans-serif]" role="img" aria-label="Время">
        {TIMES.map((t, i) => (
          <g key={t}>
            <rect x={i * 64} y="0" width="1" height="3" fill="#fff" />
            <text x={i * 64 - 1} y="12" fill="#fff" className="text-[9px]">{t}</text>
          </g>
        ))}
      </svg>
    </div>
  )
}

function ChartTabs() {
  const idle = (name: string) => (
    <span key={name} className="flex items-center">
      <button type="button" className="pr-[8px] pl-[10px] text-[#808080]">{name}</button>
      <span className="h-[13px] w-px bg-[#777]" />
    </span>
  )
  return (
    <div className="flex h-[20px] items-center border-t border-black pl-[2px]">
      {['EURAUD,M15', 'USDCHF,M15'].map(idle)}
      <button type="button" className="px-[9px] text-[#808080]">GBPUSD,M15</button>
      <button type="button" className="h-[19px] self-start border border-t-0 border-black bg-white px-[8px] leading-[17px] text-black">USDJPY,M15</button>
      {idle('EURUSD,M15')}
      <div className="mr-[6px] ml-auto flex gap-[10px] text-[#888]">
        <button type="button" aria-label="Назад"><svg width="4" height="7" viewBox="0 0 4 7"><path d="M3.5 0v7L0 3.5z" fill="currentColor" /></svg></button>
        <button type="button" aria-label="Вперёд"><svg width="4" height="7" viewBox="0 0 4 7"><path d="M.5 0v7L4 3.5z" fill="currentColor" /></svg></button>
      </div>
    </div>
  )
}

// ── Expert dialog ────────────────────────────────────────────────────────────
interface DialogButtonProps {
  children: ReactNode
  primary?: boolean
  wide?: boolean
}

function DialogButton({ children, primary, wide }: DialogButtonProps) {
  return (
    <button
      type="button"
      className={clsx(
        'h-[26px] border bg-gradient-to-b from-[#f0f0f0] to-[#e4e4e4] text-black',
        primary ? 'border-[#3c8dce]' : 'border-[#acacac]',
        wide ? 'w-[138px]' : 'w-[98px] outline-1 outline-[#f0f0f0]',
      )}
    >
      {children}
    </button>
  )
}

function ExpertDialog() {
  const idleTab = 'mt-[2px] h-[21px] border border-b-0 border-[#acacac] bg-gradient-to-b from-[#f0f0f0] to-[#e6e6e6] whitespace-nowrap'
  return (
    <div
      role="dialog"
      aria-label="Expert - Polygon"
      className="absolute top-[72px] left-[262px] w-[816px] border border-[#b0664a] bg-[#e78e68] px-[7px] pb-[7px] font-['Liberation_Sans',Arial,sans-serif] text-[14px]"
    >
      <div className="relative flex h-[36px] items-center justify-center">
        <h2 className="font-['Open_Sans',sans-serif] text-[18px] text-[#4a2a1c]">Expert - Polygon</h2>
        <div className="absolute top-0 right-0 flex">
          <button type="button" className="w-[34px] text-[22px] leading-[26px] font-bold text-[#2b1a12]" aria-label="Справка">?</button>
          <button type="button" aria-label="Закрыть" className="flex h-[26px] w-[58px] items-center justify-center bg-[#c75050] text-white">
            <CloseX size={12} />
          </button>
        </div>
      </div>

      <div className="border border-[#b0664a] bg-[#f0f0f0] pt-[8px] pr-[3px] pb-[8px] pl-[8px] text-black">
        <div className="flex h-[23px] pl-[2px]">
          <button type="button" className={clsx(idleTab, 'w-[97px]')}>О программе</button>
          <button type="button" className={clsx(idleTab, 'w-[54px]')}>Общие</button>
          <button type="button" className="relative z-10 -mb-px w-[147px] border border-b-0 border-[#acacac] bg-white whitespace-nowrap">Входные параметры</button>
          <button type="button" className={clsx(idleTab, 'w-[95px]')}>Зависимости</button>
        </div>
        <div className="flex border border-[#acacac] bg-white pt-[9px] pr-[10px] pb-[9px] pl-[10px]">
          <div className="h-[237px] flex-1 border border-[#828790]">
            <table className="w-full table-fixed border-collapse">
              <colgroup>
                <col className="w-[306px]" />
                <col />
              </colgroup>
              <thead>
                <tr className="h-[25px] border-b border-[#e8eef5] bg-[#fcfcfc]">
                  <th className="border-r border-[#e8eef5] pl-[7px] text-left font-normal">Переменная</th>
                  <th className="pl-[6px] text-left font-normal">Значение</th>
                </tr>
              </thead>
              <tbody>
                {PARAMS.map((p, i) => (
                  <tr key={p.name} className={clsx('h-[20px] border-b border-[#c8c8c8]', i % 2 === 1 && 'bg-[#eaeaea]')}>
                    <td className="border-r border-[#c8c8c8]">
                      <span className="flex items-center gap-[3px] pl-[2px] leading-[18px]"><ParamIcon kind={p.kind} />{p.name}</span>
                    </td>
                    <td className="pl-[3px] leading-[18px] whitespace-pre">{p.value}</td>
                  </tr>
                ))}
              </tbody>
            </table>
          </div>
          <div className="ml-[11px] flex flex-col justify-end gap-[14px] pb-[3px]">
            <DialogButton wide>Загрузить</DialogButton>
            <DialogButton wide>Сохранить</DialogButton>
          </div>
        </div>
        <div className="relative -mt-[9px] flex justify-end gap-[10px] pr-[6px]">
          <DialogButton primary>OK</DialogButton>
          <DialogButton>Cancel</DialogButton>
          <DialogButton>Сброс</DialogButton>
        </div>
      </div>
      <svg width="8" height="8" viewBox="0 0 8 8" className="absolute right-[11px] bottom-[10px]" aria-hidden="true">
        <path d="M1 0h3v3H1zM5 0h3v3H5zM1 4h3v3H1zM5 4h3v3H5z" fill="#bbb" />
      </svg>
    </div>
  )
}

// ── Terminal ─────────────────────────────────────────────────────────────────
function Terminal() {
  return (
    <section className="flex flex-1 border-b border-[#a0a0a0] pt-[2px] pr-[4px] pb-[5px]">
      <div className="flex w-[15px] shrink-0 flex-col items-center">
        <button type="button" aria-label="Закрыть" className="flex h-[14px] items-center text-black"><CloseX size={7} /></button>
        <h2 className="flex w-[13px] flex-1 rotate-180 items-start justify-start bg-gradient-to-b from-[#c5d3e2] to-[#d5e5f5] pt-[3px] leading-[13px] text-[#222] [writing-mode:vertical-rl]">
          Терминал
        </h2>
      </div>
      <div className="flex min-w-0 flex-1 flex-col">
        <div className="flex-1 border-t border-l border-[#a0a0a0] bg-white">
          <table className="w-full table-fixed border-collapse text-black">
            <colgroup>
              <col className="w-[151px]" />
              <col className="w-[212px]" />
              <col className="w-[106px]" />
              <col className="w-[82px]" />
              <col className="w-[106px]" />
              <col className="w-[118px]" />
              <col className="w-[118px]" />
              <col className="w-[118px]" />
              <col className="w-[118px]" />
              <col className="w-[118px]" />
              <col className="w-[118px]" />
              <col className="w-[177px]" />
              <col />
            </colgroup>
            <thead>
              <tr className="h-[24px] border-b border-[#c8c8c8] bg-[#fcfcfc]">
                {ORDER_HEAD.map((h, i) => (
                  <th
                    key={i}
                    className={clsx('border-r border-[#e4ecf5] font-normal', i === 0 ? 'pl-[6px] text-left' : 'pr-[4px] text-right')}
                  >
                    {h}
                    {h === 'Символ' && <span className="ml-[12px] pr-[4px] text-[9px] text-[#777]">/</span>}
                  </th>
                ))}
              </tr>
            </thead>
            <tbody>
              {ORDERS.map((row, r) => (
                <tr
                  key={row[0]}
                  className={clsx('h-[20px] border-b', r === 1 ? 'border-[#a8cdf5] bg-[#3399ff] text-[#d8ebff]' : 'border-[#e8e8e8]')}
                >
                  {row.map((cell, c) => (
                    <td key={c} className={clsx('border-r border-[#c8c8c8]', c === 0 ? 'pl-[3px]' : 'pr-[2px] text-right')}>
                      {c === 0 && <span className="flex items-center gap-[5px]"><DocIcon color={r === 2 ? '#e0522a' : '#2a9ad8'} />{cell}</span>}
                      {c > 0 && c < 11 && cell}
                      {c === 11 && (
                        <span className="flex items-center justify-end gap-[9px] pr-[3px]">
                          {cell}
                          <button type="button" aria-label="Закрыть ордер" className="text-[#999]"><CloseX size={8} /></button>
                        </span>
                      )}
                    </td>
                  ))}
                  <td />
                </tr>
              ))}
              <tr className="h-[20px] bg-[#c6c6c6] font-['Open_Sans','Noto_Sans',sans-serif] font-semibold">
                <td colSpan={11} className="pl-[3px]">
                  <span className="flex items-center gap-[6px] whitespace-pre">
                    <svg width="13" height="16" viewBox="0 0 13 16" className="shrink-0" aria-hidden="true">
                      <rect x="1.5" y=".5" width="10" height="14" fill="#fff" stroke="#666" />
                      <path d="M5 3h3v4h2.5l-4 4-4-4H5z" fill="#e0522a" stroke="#8c2c0e" strokeWidth=".7" />
                    </svg>
                    {'Баланс: 70 511.76 USD  Кредит: 30 000.00  Средства: 100 090.81  Маржа: 855.44  Свободная маржа: 99 235.37  Уровень: 11700.44%'}
                  </span>
                </td>
                <td className="pr-[23px] text-right">-420.95</td>
                <td />
              </tr>
            </tbody>
          </table>
        </div>
        <div className="flex h-[19px] border-t border-black pl-[2px]">
          {TERMINAL_TABS.map((t, i) => i === 0
            ? <button key={t} type="button" className="h-[18px] border border-t-0 border-black bg-white px-[9px] leading-[16px] text-black">{t}</button>
            : (
              <span key={t} className="flex items-center">
                <button type="button" className="pr-[8px] pl-[9px] text-[#808080]">{t}</button>
                <span className="h-[12px] w-px bg-[#777]" />
              </span>
            ))}
        </div>
      </div>
    </section>
  )
}

function StatusBar() {
  const cell = 'my-[3px] border-l border-[#a0a0a0]'
  return (
    <footer className="flex h-[24px] border-b border-[#a34a36] text-black">
      <span className="flex-1 pl-[2px] leading-[24px]">Для справки, нажмите F1</span>
      <span className={clsx(cell, 'w-[150px] pl-[5px] leading-[18px]')}>Default</span>
      <span className={clsx(cell, 'w-[130px]')} />
      <span className={clsx(cell, 'w-[90px]')} />
      <span className={clsx(cell, 'w-[88px]')} />
      <span className={clsx(cell, 'w-[86px]')} />
      <span className={clsx(cell, 'w-[87px]')} />
      <span className={clsx(cell, 'w-[83px]')} />
      <span className={clsx(cell, 'flex w-[162px] items-center gap-[42px] pl-[5px]')}>
        <svg width="24" height="13" viewBox="0 0 24 13" aria-hidden="true">
          <path d="M1 0v10M4 0v9M7 0v7M10 0v6M13 0v4.5M16 0v3.5M19 0v2.5M22 0v1" stroke="#6b7a1c" strokeWidth="2" />
          <path d="M1 12v1M4 11v2M7 9v4M10 8v5M13 6.5v6.5M16 5.5v7.5M19 4.5v8.5M22 3v10" stroke="#153a4a" strokeWidth="2" />
        </svg>
        7211/5 kb
      </span>
    </footer>
  )
}

// ── App ──────────────────────────────────────────────────────────────────────
export default function App() {
  const mdiButton = 'flex size-[23px] items-center justify-center border border-[#a0b4c8] bg-[#dce9f6] text-[#8090a4]'
  return (
    <div className="flex min-h-screen flex-col bg-white pt-[375px] pr-[536px] font-['Noto_Sans','Open_Sans',sans-serif] text-[11px] leading-[15px]">
      <main className="flex flex-1 flex-col bg-[#f0f0f0]">
        <header className="relative flex h-[29px] items-center justify-center border-b border-[#d8d8d8] bg-[#ebebeb] pt-[2px]">
          <svg width="20" height="20" viewBox="0 0 20 20" className="absolute top-[4px] left-[2px]" aria-hidden="true">
            <rect width="20" height="20" fill="#262a26" />
            <path d="M1 2h9v2H4v2h5v2H1z" fill="#6b736b" />
            <path d="M17 1v7h3v2h-3v2h-2v-2h-5V8l5-7zM15 4l-3 4h3z" fill="#7cc040" />
            <path d="M4 12l6 7M10 12l-6 7" fill="none" stroke="#7cc040" strokeWidth="2.2" />
            <path d="M18 13h-5v5h6" fill="none" stroke="#ddd" strokeWidth="1.6" />
          </svg>
          <h1 className="font-['Open_Sans',sans-serif] text-[18px] text-[#3c3c3c]">2978118: EGlobal-Cent4 - [USDJPY,M15]</h1>
          <div className="absolute top-0 right-[3px] flex h-[25px] text-[#222]">
            <button type="button" aria-label="Свернуть" className="w-[34px]">
              <span className="mx-auto mt-[10px] block h-[2px] w-[14px] bg-current" />
            </button>
            <button type="button" aria-label="Развернуть" className="flex w-[34px] items-center justify-center">
              <svg width="16" height="16" viewBox="0 0 16 16" aria-hidden="true">
                <path d="M1 4.5h11M1.5 3v12h11V3zM3 1h12.5v12" fill="none" stroke="currentColor" strokeWidth="1.4" />
              </svg>
            </button>
            <button type="button" aria-label="Закрыть" className="flex w-[58px] items-center justify-center bg-[#bcbcbc] text-white"><CloseX size={12} /></button>
          </div>
        </header>

        <nav className="flex h-[26px] items-center border-b border-[#a0a0a0] pl-[4px] font-['Liberation_Sans',Arial,sans-serif] text-[14px] text-[#9a9a9a]">
          <svg width="21" height="20" viewBox="0 0 21 20" aria-hidden="true">
            <rect x="1" y="1" width="15" height="12" fill="#e8f3ff" stroke="#3f7ec0" strokeWidth="1.5" />
            <path d="M3 8V4M6 10V5M9 7V3M12 8V4" stroke="#3f7ec0" />
            <rect x="6" y="8" width="14" height="11" fill="#f4faff" stroke="#3f7ec0" strokeWidth="1.5" />
            <path d="M8 11l2 5 3-4 2 4 3-3" fill="none" stroke="#3f7ec0" strokeWidth="1.2" />
          </svg>
          <div className="flex gap-[21px] pl-[9px]">
            {['Файл', 'Вид', 'Вставка', 'Графики', 'Сервис', 'Окно', 'Справка'].map(m => <button key={m} type="button">{m}</button>)}
          </div>
          <div className="mr-px ml-auto flex gap-px">
            <button type="button" aria-label="Свернуть окно" className={mdiButton}><span className="mt-[5px] h-[2px] w-[6px] bg-current" /></button>
            <button type="button" aria-label="Восстановить окно" className={mdiButton}>
              <svg width="9" height="9" viewBox="0 0 9 9" aria-hidden="true"><path d="M2.5 2.5v-2h6v4h-2M.5 3.5h6v5h-6zM.5 4.5h6" fill="none" stroke="currentColor" /></svg>
            </button>
            <button type="button" aria-label="Закрыть окно" className={mdiButton}><CloseX size={8} /></button>
          </div>
        </nav>

        <Toolbars />

        <div className="flex">
          <aside className="flex w-[211px] shrink-0 flex-col border-r border-[#909090]">
            <MarketWatch />
            <Navigator />
          </aside>
          <div className="relative min-w-0 flex-1 pr-[2px] pb-[2px]">
            <Chart />
            <div className="h-[2px]" />
            <ChartTabs />
            <ExpertDialog />
            <svg width="256" height="132" viewBox="0 0 256 132" className="pointer-events-none absolute top-[248px] left-[848px]" aria-hidden="true">
              <ellipse cx="128" cy="66" rx="121" ry="60" fill="none" stroke="#d8232a" strokeWidth="5" />
            </svg>
          </div>
        </div>

        <Terminal />
        <StatusBar />
      </main>
    </div>
  )
}
